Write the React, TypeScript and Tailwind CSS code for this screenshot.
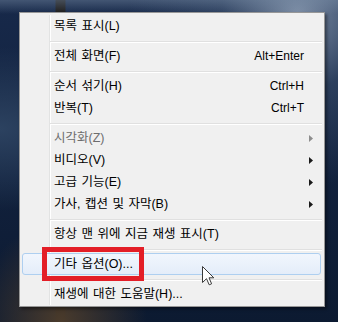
type Item =
  | { kind: "sep" }
  | {
      kind: "item"
      label: string
      shortcut?: string
      submenu?: boolean
      disabled?: boolean
      active?: boolean
    }

const items: Item[] = [
  { kind: "item", label: "목록 표시(L)" },
  { kind: "sep" },
  { kind: "item", label: "전체 화면(F)", shortcut: "Alt+Enter" },
  { kind: "sep" },
  { kind: "item", label: "순서 섞기(H)", shortcut: "Ctrl+H" },
  { kind: "item", label: "반복(T)", shortcut: "Ctrl+T" },
  { kind: "sep" },
  { kind: "item", label: "시각화(Z)", submenu: true, disabled: true },
  { kind: "item", label: "비디오(V)", submenu: true },
  { kind: "item", label: "고급 기능(E)", submenu: true },
  { kind: "item", label: "가사, 캡션 및 자막(B)", submenu: true },
  { kind: "sep" },
  { kind: "item", label: "항상 맨 위에 지금 재생 표시(T)" },
  { kind: "sep" },
  { kind: "item", label: "기타 옵션(O)...", active: true },
  { kind: "sep" },
  { kind: "item", label: "재생에 대한 도움말(H)..." },
]

function SubArrow({ disabled }: { disabled?: boolean }) {
  return (
    <svg width="4" height="7" viewBox="0 0 4 7" className="shrink-0">
      <path d="M0 0 L4 3.5 L0 7 Z" fill={disabled ? "#8d8d8d" : "#1a1a1a"} />
    </svg>
  )
}

function Cursor() {
  return (
    <svg width="13" height="20" viewBox="0 0 13 20">
      <path
        d="M0.5 0.5 L0.5 16.5 L4.5 12.7 L7.2 18.8 L9.6 17.8 L7 11.8 L11.8 11.8 Z"
        fill="#ffffff"
        stroke="#3a3a3a"
        strokeWidth="1"
        strokeLinejoin="round"
      />
    </svg>
  )
}

export default function App() {
  return (
    <div className="relative w-[338px] h-[322px] overflow-hidden pl-[19px] pt-[12px] font-['Liberation_Sans','Noto_Sans_CJK_KR',sans-serif] text-[12px] bg-[linear-gradient(to_bottom,rgba(120,140,165,0.45)_0px,transparent_14px),radial-gradient(ellipse_at_88%_4%,#7d8ea6_0%,rgba(60,80,110,0.6)_18%,transparent_40%),radial-gradient(ellipse_at_18%_100%,#4a3b2c_0%,transparent_22%),linear-gradient(to_right,transparent_55px,#1c1a19_56px,#1c1a19_65px,transparent_66px),radial-gradient(ellipse_at_0%_40%,#2c4260_0%,transparent_30%),linear-gradient(#17294a,#0c1a31)]">
      <div className="w-[306px] border border-[#979797] bg-[#f0f0f0] pt-[2px] px-[2px] pb-[1px] shadow-[2px_2px_3px_rgba(0,0,0,0.45)]">
        <div className="bg-[linear-gradient(to_right,#f0f0f0_27px,#e2e3e3_27px,#e2e3e3_28px,#ffffff_28px,#ffffff_29px,#f0f0f0_29px)]">
          {items.map((item, i) =>
            item.kind === "sep" ? (
              <div key={i} className="h-[8px] pl-[28px] pt-[4px]">
                <div className="h-[2px] border-t border-[#e0e0e0] border-b border-b-white" />
              </div>
            ) : (
              <div
                key={i}
                className={
                  item.active
                    ? "h-[22px] flex items-center pl-[31px] pr-[8px] mr-[1px] rounded-[3px] border border-[#aecff0] bg-[linear-gradient(#f1f6fd,#e4edf9)]"
                    : "h-[22px] flex items-center pl-[32px] pr-[9px]"
                }
              >
                <span
                  className={
                    item.disabled
                      ? "flex-1 text-[12.5px] [word-spacing:1px] text-[#6d6d6d]"
                      : "flex-1 text-[12.5px] [word-spacing:1px] text-black"
                  }
                >
                  {item.label}
                </span>
                {item.shortcut && (
                  <span className="mr-[9px] text-black">{item.shortcut}</span>
                )}
                {item.submenu && <SubArrow disabled={item.disabled} />}
              </div>
            )
          )}
        </div>
      </div>

      {/* annotation box */}
      <div className="absolute left-[42px] top-[247px] w-[102px] h-[34px] border-[5px] border-[#e31e27]" />

      <div className="absolute left-[202px] top-[266px]">
        <Cursor />
      </div>
    </div>
  )
}
